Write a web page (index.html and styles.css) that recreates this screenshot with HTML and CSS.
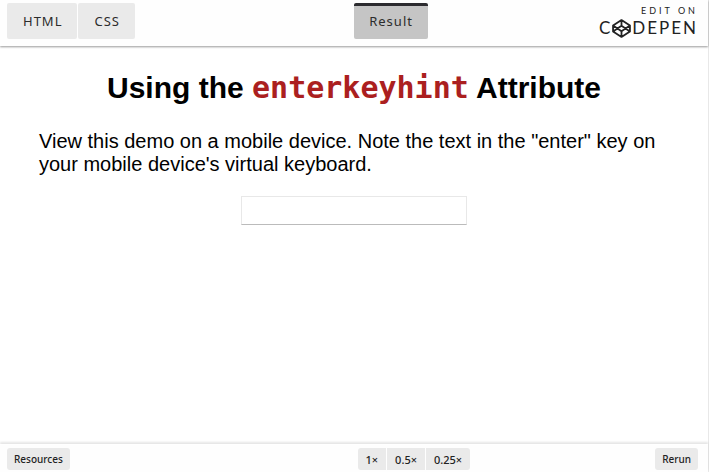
FILE: index.html
```html
<!DOCTYPE html>
<html lang="en">
<head>
<meta charset="utf-8">
<meta name="viewport" content="width=device-width, initial-scale=1">
<title>Using the enterkeyhint Attribute</title>
<link rel="stylesheet" href="styles.css">
</head>
<body>
<div class="embed">
  <header class="topbar">
    <nav class="tabs">
      <button class="tab" type="button">HTML</button>
      <button class="tab" type="button">CSS</button>
    </nav>
    <button class="tab tab-active" type="button" aria-pressed="true">Result</button>
    <a class="brand" href="#">
      <span class="brand-edit">EDIT ON</span>
      <span class="brand-name">
        <span>C</span>
        <svg class="brand-mark" viewBox="0 0 18 18" aria-hidden="true">
          <path d="M9 1 17 6.200V11.800L9 17 1 11.800V6.200ZM9 1V6.500M9 11.500V17M1 6.200 9 11.500 17 6.200M1 11.800 9 6.500 17 11.800"/>
        </svg>
        <span>DEPEN</span>
      </span>
    </a>
  </header>
  <main class="result">
    <h1 class="title">Using the <code class="attr">enterkeyhint</code> Attribute</h1>
    <p class="intro">View this demo on a mobile device. Note the text in the "enter" key on your mobile device's virtual keyboard.</p>
    <input class="field" type="text" enterkeyhint="done" aria-labelledby="field-name">
    <span id="field-name" hidden>Text</span>
  </main>
  <footer class="bottombar">
    <div class="start"><button class="mini" type="button">Resources</button></div>
    <div class="zoom">
      <button class="mini" type="button">1×</button>
      <button class="mini" type="button">0.5×</button>
      <button class="mini" type="button">0.25×</button>
    </div>
    <button class="mini end" type="button">Rerun</button>
  </footer>
</div>
</body>
</html>
```
FILE: styles.css
```css
* { box-sizing: border-box; }

body {
  margin: 0;
  background: #fff;
  color: #000;
  font-family: "Liberation Sans", Arial, sans-serif;
}

.embed {
  display: flex;
  flex-direction: column;
  min-height: 100vh;
  border-right: 1px solid #e8e8e8;
}

.topbar,
.bottombar {
  display: grid;
  background: #fefefe;
}

.topbar {
  grid-template-columns: 9fr auto 7fr;
  padding: 3px 10px 7px 7px;
  box-shadow: 0 1px 2px rgba(0, 0, 0, 0.4);
}

.tabs,
.zoom {
  display: flex;
  gap: 1px;
}

.tab {
  height: 36px;
  padding: 0 15px 0 16px;
  border: 0;
  border-radius: 2px;
  background: #eaeaea;
  color: #2c2c2c;
  font: 13px "Noto Sans", sans-serif;
  letter-spacing: 1px;
}

.tab-active {
  padding: 0 15px 3px;
  border-top: 3px solid #2c2b2f;
  background: #c5c5c5;
}

.brand {
  justify-self: end;
  display: flex;
  flex-direction: column;
  align-items: flex-end;
  padding-top: 2px;
  color: #222;
  font-family: Lato, sans-serif;
  text-decoration: none;
}

.brand-edit {
  font-size: 9px;
  line-height: 12px;
  letter-spacing: 3px;
}

.brand-name {
  display: flex;
  align-items: center;
  font-size: 17px;
  font-weight: 400;
  line-height: 22px;
  letter-spacing: 2px;
}

.brand-mark {
  width: 19px;
  height: 19px;
  margin-right: 1px;
  fill: none;
  stroke: #222;
  stroke-width: 1.700;
  stroke-linejoin: round;
}

.result {
  flex: 1;
  padding: 24px 39px;
}

.title {
  margin: 0 0 24px;
  font-size: 30px;
  line-height: 36px;
  text-align: center;
}

.attr {
  color: #ab1f20;
  font-family: "DejaVu Sans Mono", monospace;
}

.intro {
  margin: 0 0 20px;
  font-size: 20px;
  line-height: 23px;
}

.field {
  display: block;
  width: 226px;
  height: 29px;
  margin: 0 auto;
  padding: 4px;
  border: 1px solid #e8e8e8;
  border-bottom-color: #bbb;
  background: #fff;
  font: 20px "Liberation Sans", sans-serif;
}

.bottombar {
  grid-template-columns: 20fr auto 13fr;
  padding: 3px 10px 2px 7px;
  border-top: 1px solid #fff;
  box-shadow: 0 -2px 2px rgba(0, 0, 0, 0.1);
}

.mini {
  height: 22px;
  padding: 0 7px;
  border: 0;
  border-radius: 3px;
  background: #eaeaea;
  color: #222;
  font: 500 10px "Noto Sans", sans-serif;
}

.zoom .mini {
  padding: 0 8px;
  border-radius: 0;
  font-size: 11px;
}

.zoom .mini:first-child { border-radius: 3px 0 0 3px; }
.zoom .mini:last-child { border-radius: 0 3px 3px 0; }

.end { justify-self: end; }
```
